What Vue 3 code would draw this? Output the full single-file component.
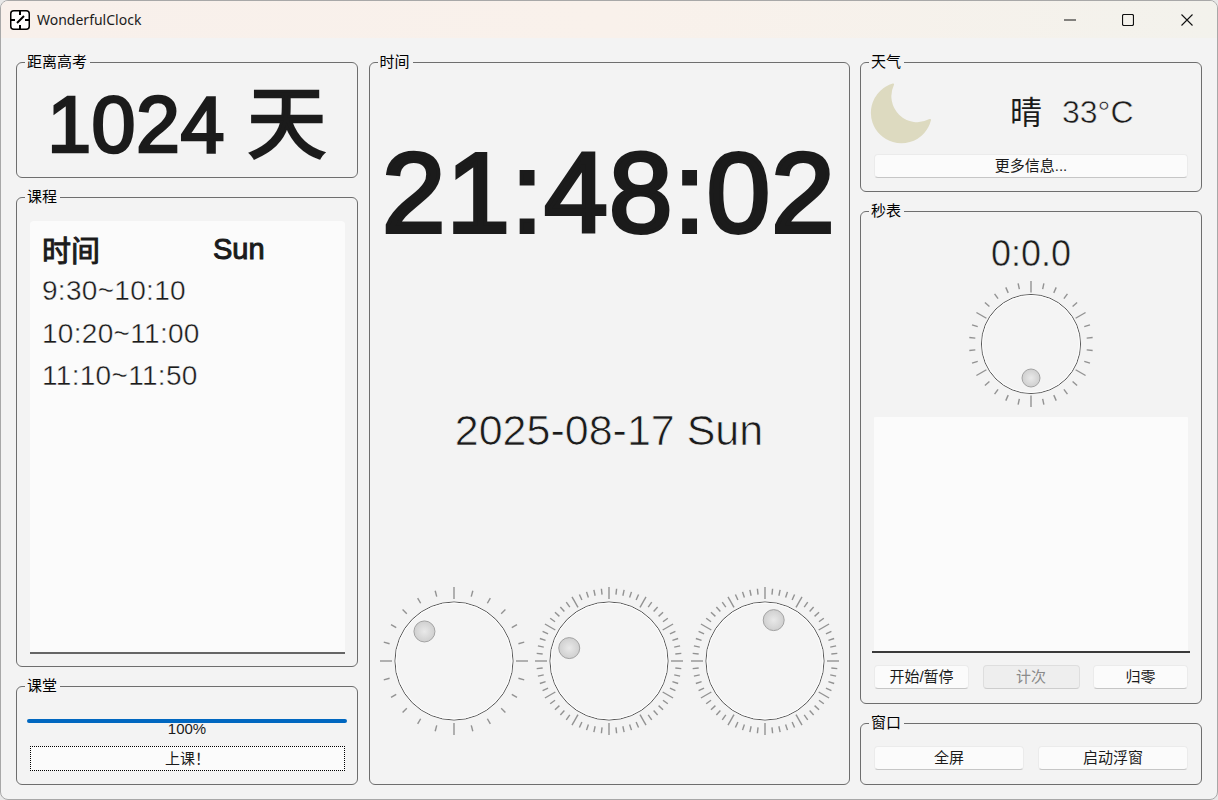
<script setup>
import { computed } from "vue";

const schedule = ["9:30~10:10", "10:20~11:00", "11:10~11:50"];

function buildDial(value, range, ticks, majorEvery, r, major, minor, knobAt, knobR) {
  const size = Math.ceil(major[1]) * 2 + 2;
  const c = size / 2;
  const lines = [];
  for (let i = 0; i < ticks; i++) {
    const a = (i / ticks) * Math.PI * 2;
    const len = i % majorEvery === 0 ? major : minor;
    lines.push({
      id: i,
      x1: c + Math.sin(a) * len[0],
      y1: c - Math.cos(a) * len[0],
      x2: c + Math.sin(a) * len[1],
      y2: c - Math.cos(a) * len[1],
    });
  }
  const ang = (value / range) * Math.PI * 2;
  return {
    size,
    c,
    r,
    lines,
    knobR,
    kx: c + Math.sin(ang) * knobAt,
    ky: c - Math.cos(ang) * knobAt,
  };
}

const clockDials = computed(() => [
  buildDial(21, 24, 24, 6, 59, [62, 74], [66.7, 72.7], 41.8, 10.5),
  buildDial(48, 60, 60, 5, 59, [62, 74], [66.7, 72.7], 41.8, 10.5),
  buildDial(2, 60, 60, 5, 59, [62, 74], [66.7, 72.7], 41.8, 10.5),
]);

const stopDial = computed(() => buildDial(15, 30, 30, 5, 49.5, [51.5, 63], [56, 62], 34, 9));
</script>

<template>
  <div class="window">
    <header class="titlebar">
      <svg class="app-icon" width="20" height="20" viewBox="0 0 20 20">
        <rect x="0.75" y="0.75" width="18.5" height="18.5" rx="3" fill="#fff" stroke="#000" stroke-width="1.5" />
        <path d="M10 1v4M10 15v4M1 10h4M15 10h4" stroke="#000" stroke-width="2" />
        <path d="M7 13L14 6" stroke="#000" stroke-width="2" />
      </svg>
      <span class="app-name">WonderfulClock</span>
      <div class="win-controls">
        <span class="win-btn">
          <svg width="12" height="12" viewBox="0 0 12 12"><path d="M0 6h12" stroke="#111" stroke-width="1" /></svg>
        </span>
        <span class="win-btn">
          <svg width="12" height="12" viewBox="0 0 12 12"><rect x="0.5" y="0.5" width="11" height="11" rx="1.5" fill="none" stroke="#111" stroke-width="1.2" /></svg>
        </span>
        <span class="win-btn">
          <svg width="12" height="12" viewBox="0 0 12 12"><path d="M0.5 0.5l11 11M11.5 0.5l-11 11" stroke="#111" stroke-width="1.1" /></svg>
        </span>
      </div>
    </header>

    <main class="content">
      <div class="col">
        <section class="group countdown">
          <span class="legend">距离高考</span>
          <div class="days">1024 天</div>
        </section>

        <section class="group schedule">
          <span class="legend">课程</span>
          <div class="table">
            <div class="table-head">
              <span class="th-time">时间</span>
              <span class="th-day">Sun</span>
            </div>
            <div v-for="row in schedule" :key="row" class="table-row">{{ row }}</div>
          </div>
        </section>

        <section class="group lesson">
          <span class="legend">课堂</span>
          <div class="progress"><div class="progress-fill"></div></div>
          <div class="progress-text">100%</div>
          <button class="btn focused">上课！</button>
        </section>
      </div>

      <section class="group clock">
        <span class="legend">时间</span>
        <div class="time">21:48:02</div>
        <div class="date">2025-08-17 Sun</div>
        <div class="dials">
          <svg
            v-for="(d, i) in clockDials"
            :key="i"
            :width="d.size"
            :height="d.size"
            :viewBox="`0 0 ${d.size} ${d.size}`"
          >
            <defs>
              <radialGradient :id="`knob${i}`">
                <stop offset="0" stop-color="#e9e9e9" />
                <stop offset="1" stop-color="#cfcfcf" />
              </radialGradient>
            </defs>
            <line
              v-for="t in d.lines"
              :key="t.id"
              :x1="t.x1"
              :y1="t.y1"
              :x2="t.x2"
              :y2="t.y2"
              stroke="#929292"
              stroke-width="1.4"
            />
            <circle :cx="d.c" :cy="d.c" :r="d.r" fill="#f4f4f4" stroke="#555" stroke-width="1" />
            <circle :cx="d.c" :cy="d.c" :r="d.r - 1" fill="none" stroke="#fff" stroke-width="1" />
            <circle :cx="d.kx" :cy="d.ky" :r="d.knobR" :fill="`url(#knob${i})`" stroke="#a3a3a3" stroke-width="1" />
          </svg>
        </div>
      </section>

      <div class="col">
        <section class="group weather">
          <span class="legend">天气</span>
          <div class="weather-row">
            <svg class="moon" width="62" height="62" viewBox="0 0 62 62">
              <path
                d="M23 1.5A29.5 29.5 0 1 0 60 37A27 27 0 0 1 23 1.5Z"
                fill="#dddac0"
                stroke="#dddac0"
                stroke-width="2"
                stroke-linejoin="round"
              />
            </svg>
            <div class="weather-text"><span>晴</span><span class="temp">33°C</span></div>
          </div>
          <button class="btn">更多信息...</button>
        </section>

        <section class="group stopwatch">
          <span class="legend">秒表</span>
          <div class="stop-time">0:0.0</div>
          <svg
            class="stop-dial"
            :width="stopDial.size"
            :height="stopDial.size"
            :viewBox="`0 0 ${stopDial.size} ${stopDial.size}`"
          >
            <defs>
              <radialGradient id="knobStop">
                <stop offset="0" stop-color="#e9e9e9" />
                <stop offset="1" stop-color="#cfcfcf" />
              </radialGradient>
            </defs>
            <line
              v-for="t in stopDial.lines"
              :key="t.id"
              :x1="t.x1"
              :y1="t.y1"
              :x2="t.x2"
              :y2="t.y2"
              stroke="#929292"
              stroke-width="1.4"
            />
            <circle :cx="stopDial.c" :cy="stopDial.c" :r="stopDial.r" fill="#f4f4f4" stroke="#555" stroke-width="1" />
            <circle :cx="stopDial.c" :cy="stopDial.c" :r="stopDial.r - 1" fill="none" stroke="#fff" stroke-width="1" />
            <circle :cx="stopDial.kx" :cy="stopDial.ky" :r="stopDial.knobR" fill="url(#knobStop)" stroke="#a3a3a3" stroke-width="1" />
          </svg>
          <div class="laps"></div>
          <div class="btn-row three">
            <button class="btn">开始/暂停</button>
            <button class="btn" disabled>计次</button>
            <button class="btn">归零</button>
          </div>
        </section>

        <section class="group win-group">
          <span class="legend">窗口</span>
          <div class="btn-row two">
            <button class="btn">全屏</button>
            <button class="btn">启动浮窗</button>
          </div>
        </section>
      </div>
    </main>
  </div>
</template>

<style scoped>
.window {
  box-sizing: border-box;
  width: 1218px;
  height: 800px;
  display: flex;
  flex-direction: column;
  background: #f3f3f3;
  border: 1px solid #a8a8a8;
  border-radius: 8px;
  overflow: hidden;
  color: #1b1b1b;
  font-family: "Liberation Sans", "Noto Sans CJK SC", sans-serif;
  font-size: 15px;
}

.titlebar {
  height: 37px;
  flex: none;
  display: flex;
  align-items: center;
  padding-left: 9px;
  background: linear-gradient(90deg, #f8f0eb 0%, #f9f1eb 50%, #f3f2ec 100%);
}

.app-icon {
  flex: none;
}

.app-name {
  margin-left: 7px;
  font-family: "Noto Sans", sans-serif;
  font-size: 14px;
}

.win-controls {
  margin-left: auto;
  display: flex;
  padding-right: 1px;
}

.win-btn {
  width: 58.5px;
  height: 37px;
  display: flex;
  align-items: center;
  justify-content: center;
}

.content {
  flex: 1;
  display: grid;
  grid-template-columns: 342px 481px 342px;
  column-gap: 10.5px;
  padding: 24px 15px 14px;
}

.col {
  display: flex;
  flex-direction: column;
  gap: 19px;
}

.group {
  position: relative;
  box-sizing: border-box;
  border: 1px solid #6e6e6e;
  border-radius: 6px;
}

.legend {
  position: absolute;
  top: -10px;
  left: 8px;
  padding: 0 3px 0 2px;
  background: #f3f3f3;
  color: #000;
  font-size: 15px;
  line-height: 17px;
}

.countdown {
  height: 116px;
  display: flex;
  align-items: center;
  justify-content: center;
}

.days {
  margin-top: 8px;
  font-size: 79px;
  line-height: 1;
  letter-spacing: 0.5px;
  -webkit-text-stroke: 2.7px #1b1b1b;
}

.schedule {
  flex: 1;
  padding: 23px 12px 12px 13px;
}

.table {
  box-sizing: border-box;
  height: 100%;
  background: #fbfbfb;
  border-radius: 4px 4px 0 0;
  border-bottom: 2px solid #666;
  padding: 7px 0 0 12px;
}

.table-head {
  display: flex;
  height: 42px;
  align-items: center;
  font-size: 29px;
  -webkit-text-stroke: 1px #1b1b1b;
}

.th-time {
  width: 171px;
}

.table-row {
  font-size: 28px;
  line-height: 42.5px;
  letter-spacing: 0.3px;
  -webkit-text-stroke: 0.4px #fbfbfb;
}

.lesson {
  height: 99px;
  padding: 32px 10px 0;
  text-align: center;
}

.progress {
  height: 4px;
  border-radius: 2px;
  overflow: hidden;
  background: #d0d0d0;
}

.progress-fill {
  height: 100%;
  width: 100%;
  background: #0067c0;
}

.progress-text {
  height: 16px;
  line-height: 12px;
  font-size: 15px;
  margin-bottom: 7px;
}

.btn {
  display: block;
  box-sizing: border-box;
  height: 24px;
  padding: 0;
  width: 100%;
  background: #fbfbfb;
  border: 1px solid #ebebeb;
  border-bottom-color: #c6c6c6;
  border-radius: 4px;
  color: #1b1b1b;
  font-family: "Liberation Sans", "Noto Sans CJK SC", sans-serif;
  font-size: 15px;
  line-height: 20px;
}

.btn:disabled {
  background: #eeeeee;
  border-color: #dedede;
  border-bottom-color: #cdcdcd;
  color: #8a8a8a;
}

.focused {
  height: 25px;
  width: 315px;
  margin-left: 3px;
  border: 1px dotted #000;
  border-radius: 0;
}

.clock {
  height: 723px;
  display: flex;
  flex-direction: column;
}

.time {
  height: 238px;
  margin-top: 10px;
  display: flex;
  align-items: center;
  justify-content: center;
  font-size: 114px;
  letter-spacing: 1.3px;
  -webkit-text-stroke: 4px #1b1b1b;
}

.date {
  height: 238px;
  display: flex;
  align-items: center;
  justify-content: center;
  font-size: 43px;
  -webkit-text-stroke: 0.7px #f3f3f3;
}

.dials {
  margin-top: 37px;
  display: flex;
  justify-content: center;
  gap: 5.5px;
}

.weather {
  height: 130px;
  padding: 0 13px;
}

.weather-row {
  height: 91px;
  display: flex;
  align-items: center;
  margin-left: -4px;
  padding-top: 10px;
  box-sizing: border-box;
}

.moon {
  flex: none;
}

.weather-text {
  margin-left: 78px;
  margin-top: -7px;
  display: flex;
  gap: 20px;
  font-size: 32px;
  align-items: center;
}

.temp {
  margin-top: 4px;
  -webkit-text-stroke: 0.5px #f3f3f3;
}

.stopwatch {
  flex: 1;
  display: flex;
  flex-direction: column;
  align-items: center;
  padding: 0 13px;
}

.stop-time {
  margin-top: 19px;
  font-size: 36px;
  line-height: 46px;
  -webkit-text-stroke: 0.5px #f3f3f3;
}

.stop-dial {
  margin-top: 3px;
}

.laps {
  align-self: stretch;
  height: 234px;
  margin: 9px -2px 0;
  padding: 0 2px;
  background: linear-gradient(90deg, transparent 2px, #fbfbfb 2px, #fbfbfb calc(100% - 2px), transparent calc(100% - 2px));
  border-bottom: 2px solid #3a3a3a;
  border-radius: 4px 4px 0 0;
}

.btn-row {
  align-self: stretch;
  display: grid;
  margin-top: 12px;
}

.btn-row.three {
  grid-template-columns: 95px 97px 95px;
  justify-content: space-between;
}

.btn-row.two {
  grid-template-columns: 150px 150px;
  justify-content: space-between;
  margin-top: 22px;
}

.win-group {
  height: 62px;
  padding: 0 13px;
}
</style>

<style>
html,
body {
  margin: 0;
  background: #e8e8e8;
}
</style>
